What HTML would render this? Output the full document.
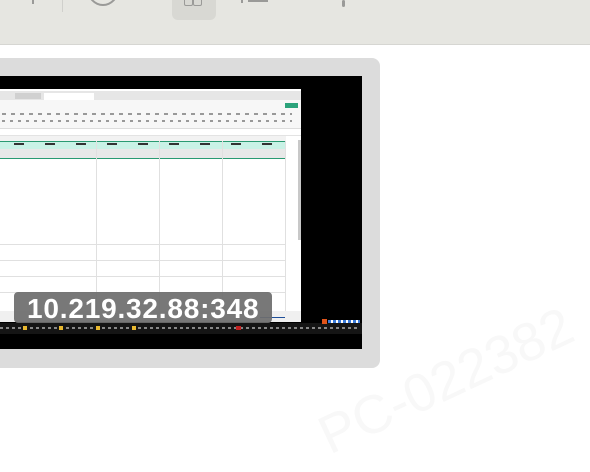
<!DOCTYPE html>
<html><head><meta charset="utf-8"><style>
body{margin:0;width:590px;height:472px;background:#fff;position:relative;overflow:hidden;font-family:"Liberation Sans",sans-serif}
.a{position:absolute}
</style></head><body>
<div class="a" style="left:334px;top:408px;font-size:54px;color:#f8f8f8;transform:rotate(-25deg);transform-origin:left bottom;white-space:nowrap;line-height:56px">PC-022382</div>
<div class="a" style="left:0;top:0;width:590px;height:44px;background:#e6e6e1;border-bottom:1px solid #d6d6d2"></div>
<div class="a" style="left:32px;top:0;width:2px;height:4px;background:#9a9a98"></div>
<div class="a" style="left:62px;top:0;width:1px;height:12px;background:#d0d0cc"></div>
<div class="a" style="left:87px;top:-28px;width:28px;height:30px;border:2px solid #9a9a98;border-radius:50%"></div>
<div class="a" style="left:172px;top:-10px;width:44px;height:30px;background:#d8d8d3;border-radius:6px"></div>
<div class="a" style="left:184px;top:-4px;width:7px;height:8px;border:1.5px solid #9a9a98;border-radius:2px"></div>
<div class="a" style="left:193px;top:-4px;width:7px;height:8px;border:1.5px solid #9a9a98;border-radius:2px"></div>
<div class="a" style="left:241px;top:0;width:2px;height:3px;background:#9a9a98"></div>
<div class="a" style="left:248px;top:0;width:20px;height:2px;background:#9a9a98"></div>
<div class="a" style="left:342px;top:0;width:3px;height:7px;background:#9a9a98;border-radius:2px"></div>

<div class="a" style="left:-10px;top:58px;width:390px;height:310px;background:#dcdcdc;border-radius:8px"></div>
<div class="a" style="left:0;top:76px;width:362px;height:273px;background:#000"></div>
<div class="a" style="left:0;top:89px;width:301px;height:233px;background:#fff"></div>
<div class="a" style="left:0;top:91px;width:301px;height:9px;background:#e6e6e6"></div>
<div class="a" style="left:15px;top:93px;width:26px;height:6px;background:#d0d0d0"></div>
<div class="a" style="left:44px;top:93px;width:50px;height:7px;background:#fff"></div>
<div class="a" style="left:0;top:100px;width:301px;height:28px;background:#f7f7f7;border-bottom:1px solid #ddd"></div>
<div class="a" style="left:285px;top:103px;width:13px;height:5px;background:#2ca37b"></div>
<div class="a" style="left:2px;top:113px;width:290px;height:2px;background:repeating-linear-gradient(90deg,#999 0 4px,transparent 4px 9px)"></div>
<div class="a" style="left:2px;top:120px;width:290px;height:2px;background:repeating-linear-gradient(90deg,#999 0 3px,transparent 3px 8px)"></div>
<div class="a" style="left:0;top:129px;width:301px;height:6px;background:#fff;border-bottom:1px solid #e3e3e3"></div>
<div class="a" style="left:0;top:136px;width:286px;height:5px;background:#f2f2f2"></div>
<div class="a" style="left:0;top:141px;width:285px;height:7px;background:#c9f2e6;border:1px solid #2a9a72;border-left:0"></div>
<div class="a" style="left:0;top:149px;width:285px;height:9px;background:#e8e8e8;border-bottom:1px solid #2a9a72"></div>
<div class="a" style="left:4px;top:143px;width:280px;height:2px;background:repeating-linear-gradient(90deg,transparent 0 10px,#333 10px 20px,transparent 20px 31px)"></div>
<div class="a" style="left:96px;top:141px;width:1px;height:170px;background:#e0e0e0"></div>
<div class="a" style="left:159px;top:141px;width:1px;height:170px;background:#e0e0e0"></div>
<div class="a" style="left:222px;top:141px;width:1px;height:170px;background:#e0e0e0"></div>
<div class="a" style="left:285px;top:141px;width:1px;height:170px;background:#e0e0e0"></div>
<div class="a" style="left:0;top:244px;width:285px;height:1px;background:#e0e0e0"></div>
<div class="a" style="left:0;top:260px;width:285px;height:1px;background:#e0e0e0"></div>
<div class="a" style="left:0;top:276px;width:285px;height:1px;background:#e0e0e0"></div>
<div class="a" style="left:0;top:292px;width:285px;height:1px;background:#e0e0e0"></div>
<div class="a" style="left:298px;top:140px;width:3px;height:100px;background:#c8c8c8"></div>
<div class="a" style="left:0;top:311px;width:301px;height:11px;background:#f0f0f0"></div>
<div class="a" style="left:260px;top:317px;width:25px;height:1px;background:#1f4f9a"></div>
<div class="a" style="left:0;top:323px;width:362px;height:11px;background:#151515"></div>
<div class="a" style="left:0;top:327px;width:360px;height:2px;background:repeating-linear-gradient(90deg,#888 0 3px,transparent 3px 6px)"></div>
<div class="a" style="left:23px;top:326px;width:4px;height:4px;background:#e8b830"></div>
<div class="a" style="left:59px;top:326px;width:4px;height:4px;background:#e8b830"></div>
<div class="a" style="left:96px;top:326px;width:4px;height:4px;background:#e8b830"></div>
<div class="a" style="left:132px;top:326px;width:4px;height:4px;background:#e8b830"></div>
<div class="a" style="left:236px;top:326px;width:5px;height:4px;background:#c02020"></div>
<div class="a" style="left:322px;top:319px;width:5px;height:5px;background:#e0541a"></div>
<div class="a" style="left:328px;top:320px;width:32px;height:3px;background:repeating-linear-gradient(90deg,#3a7ad8 0 3px,#fff 3px 5px)"></div>
<div class="a" style="left:14px;top:292px;width:258px;height:31px;background:rgba(110,110,110,0.93);border-radius:4px"></div>
<div class="a" style="left:27px;top:293px;color:#fff;font-weight:bold;font-size:28px;letter-spacing:0.8px;line-height:31px">10.219.32.88:348</div>
</body></html>
